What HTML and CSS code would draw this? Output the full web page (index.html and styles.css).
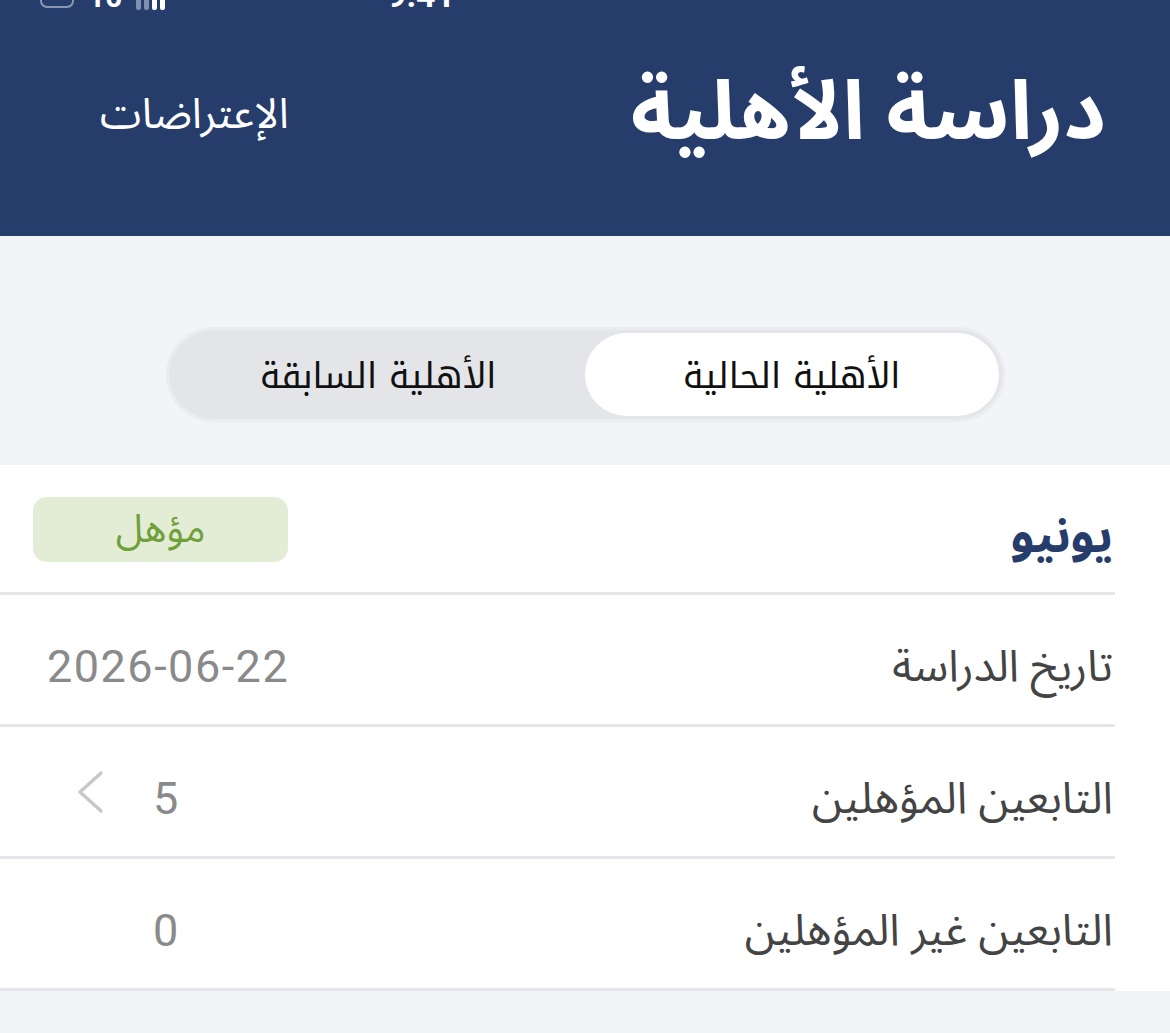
FILE: index.html
```html
<!DOCTYPE html>
<html lang="ar" dir="rtl">
<head>
  <meta charset="UTF-8">
  <meta name="viewport" content="width=device-width, initial-scale=1.0">
  <title>دراسة الأهلية</title>
  <link rel="stylesheet" href="styles.css">
</head>
<body>
  <!-- Header -->
  <header class="top-bar">
    <div class="status-row">
      <span class="status-time">9:41</span>
      <span class="status-icons">
        <span class="signal"><i></i><i></i><i></i><i></i></span>
        <span class="status-num">10</span>
        <span class="battery"></span>
      </span>
    </div>
    <div class="title-row">
      <h1>دراسة الأهلية</h1>
      <a class="header-link" href="#">الإعتراضات</a>
    </div>
  </header>

  <!-- Tabs -->
  <div class="tabs-wrap">
    <div class="segmented">
      <button class="seg-btn active">الأهلية الحالية</button>
      <button class="seg-btn">الأهلية السابقة</button>
    </div>
  </div>

  <!-- Details list -->
  <section class="card">
    <div class="row row-head">
      <span class="month">يونيو</span>
      <span class="badge">مؤهل</span>
    </div>
    <div class="row">
      <span class="label">تاريخ الدراسة</span>
      <span class="value date">2026-06-22</span>
    </div>
    <div class="row">
      <span class="label">التابعين المؤهلين</span>
      <span class="value-group">
        <span class="value num">5</span>
        <svg class="chev" width="30" height="44" viewBox="0 0 30 44">
          <path d="M26 3 L5 22 L26 41" fill="none" stroke="#c7c7cc" stroke-width="3.5" stroke-linecap="round" stroke-linejoin="round"/>
        </svg>
      </span>
    </div>
    <div class="row">
      <span class="label">التابعين غير المؤهلين</span>
      <span class="value-group">
        <span class="value num">0</span>
        <span class="chev-space"></span>
      </span>
    </div>
  </section>
</body>
</html>
```

FILE: styles.css
```css
/* Base */
body {
  margin: 0;
  padding: 0;
  background: #f3f4f8;
  font-family: "Noto Sans Arabic", "DejaVu Sans", sans-serif;
  color: #444;
  height: 1033px;
  overflow: hidden;
}

/* Header */
.top-bar {
  background-color: #263c6a;
  height: 236px;
  box-sizing: border-box;
  overflow: hidden;
}
.status-row {
  height: 10px;
  overflow: hidden;
  display: flex;
  justify-content: space-between;
  align-items: flex-end;
  padding: 0 715px 0 40px;
  color: #fff;
}
.status-time {
  font-family: Roboto, sans-serif;
  font-weight: 700;
  font-size: 34px;
  line-height: 34px;
  margin-bottom: -2px;
  direction: ltr;
}
.status-icons {
  display: flex;
  align-items: flex-end;
  gap: 14px;
  direction: rtl;
}
.status-num {
  font-family: Roboto, sans-serif;
  font-weight: 700;
  font-size: 30px;
  line-height: 30px;
  margin-bottom: -2px;
}
.signal {
  display: flex;
  align-items: flex-end;
  gap: 3px;
  direction: ltr;
}
.signal i {
  display: block;
  width: 5px;
  height: 20px;
  background: #fff;
  border-radius: 2px;
}
.signal i:first-child,
.signal i:nth-child(2) {
  background: #8090b0;
}
.battery {
  width: 30px;
  height: 24px;
  border: 2px solid #8a97b3;
  border-radius: 7px;
  margin-bottom: 2px;
}
.title-row {
  display: flex;
  justify-content: space-between;
  align-items: center;
  height: 200px;
  padding: 6px 64px 0 100px;
  box-sizing: border-box;
}
.title-row h1 {
  margin: 0;
  color: #fff;
  font-size: 82px;
  font-weight: 700;
}
.header-link {
  color: #fff;
  text-decoration: none;
  font-size: 42px;
  margin-top: 2px;
}

/* Segmented control */
.tabs-wrap {
  padding: 91px 0 43px;
  display: flex;
  justify-content: center;
}
.segmented {
  width: 839px;
  height: 95px;
  box-sizing: border-box;
  background: #e4e5e9;
  border: 3px solid #ebecf0;
  border-radius: 48px;
  padding: 3px;
  display: flex;
}
.seg-btn {
  flex: 1;
  border: none;
  background: transparent;
  border-radius: 42px;
  font-family: "Noto Kufi Arabic", "DejaVu Sans Condensed", "DejaVu Sans", sans-serif;
  font-size: 35px;
  color: #111;
  cursor: pointer;
  padding: 4px 0 0;
}
.seg-btn.active {
  background: #fff;
}

/* Card list */
.card {
  background: #fff;
}
.row {
  height: 132px;
  box-sizing: border-box;
  margin-right: 55px;
  padding: 14px 2px 0 33px;
  border-bottom: 3px solid #e6e6ea;
  display: flex;
  justify-content: space-between;
  align-items: center;
}
.row-head {
  height: 130px;
  padding-top: 6px;
}
.month {
  font-size: 48px;
  font-weight: 700;
  color: #263c6a;
  margin-top: 10px;
}
.badge {
  width: 255px;
  height: 65px;
  border-radius: 14px;
  background: #e3edd6;
  color: #70a03a;
  font-size: 39px;
  display: flex;
  align-items: center;
  justify-content: center;
  margin-bottom: 4px;
}
.label {
  font-size: 44px;
  color: #444;
}
.value {
  font-family: Roboto, sans-serif;
  font-size: 45px;
  color: #8a8a8a;
  direction: ltr;
}
.date {
  margin-left: 14px;
  letter-spacing: 1.5px;
}
.value-group {
  display: flex;
  align-items: center;
  gap: 48px;
  margin-left: 42px;
}
.chev {
  display: block;
  margin-top: -14px;
}
.chev-space {
  width: 30px;
}
```
